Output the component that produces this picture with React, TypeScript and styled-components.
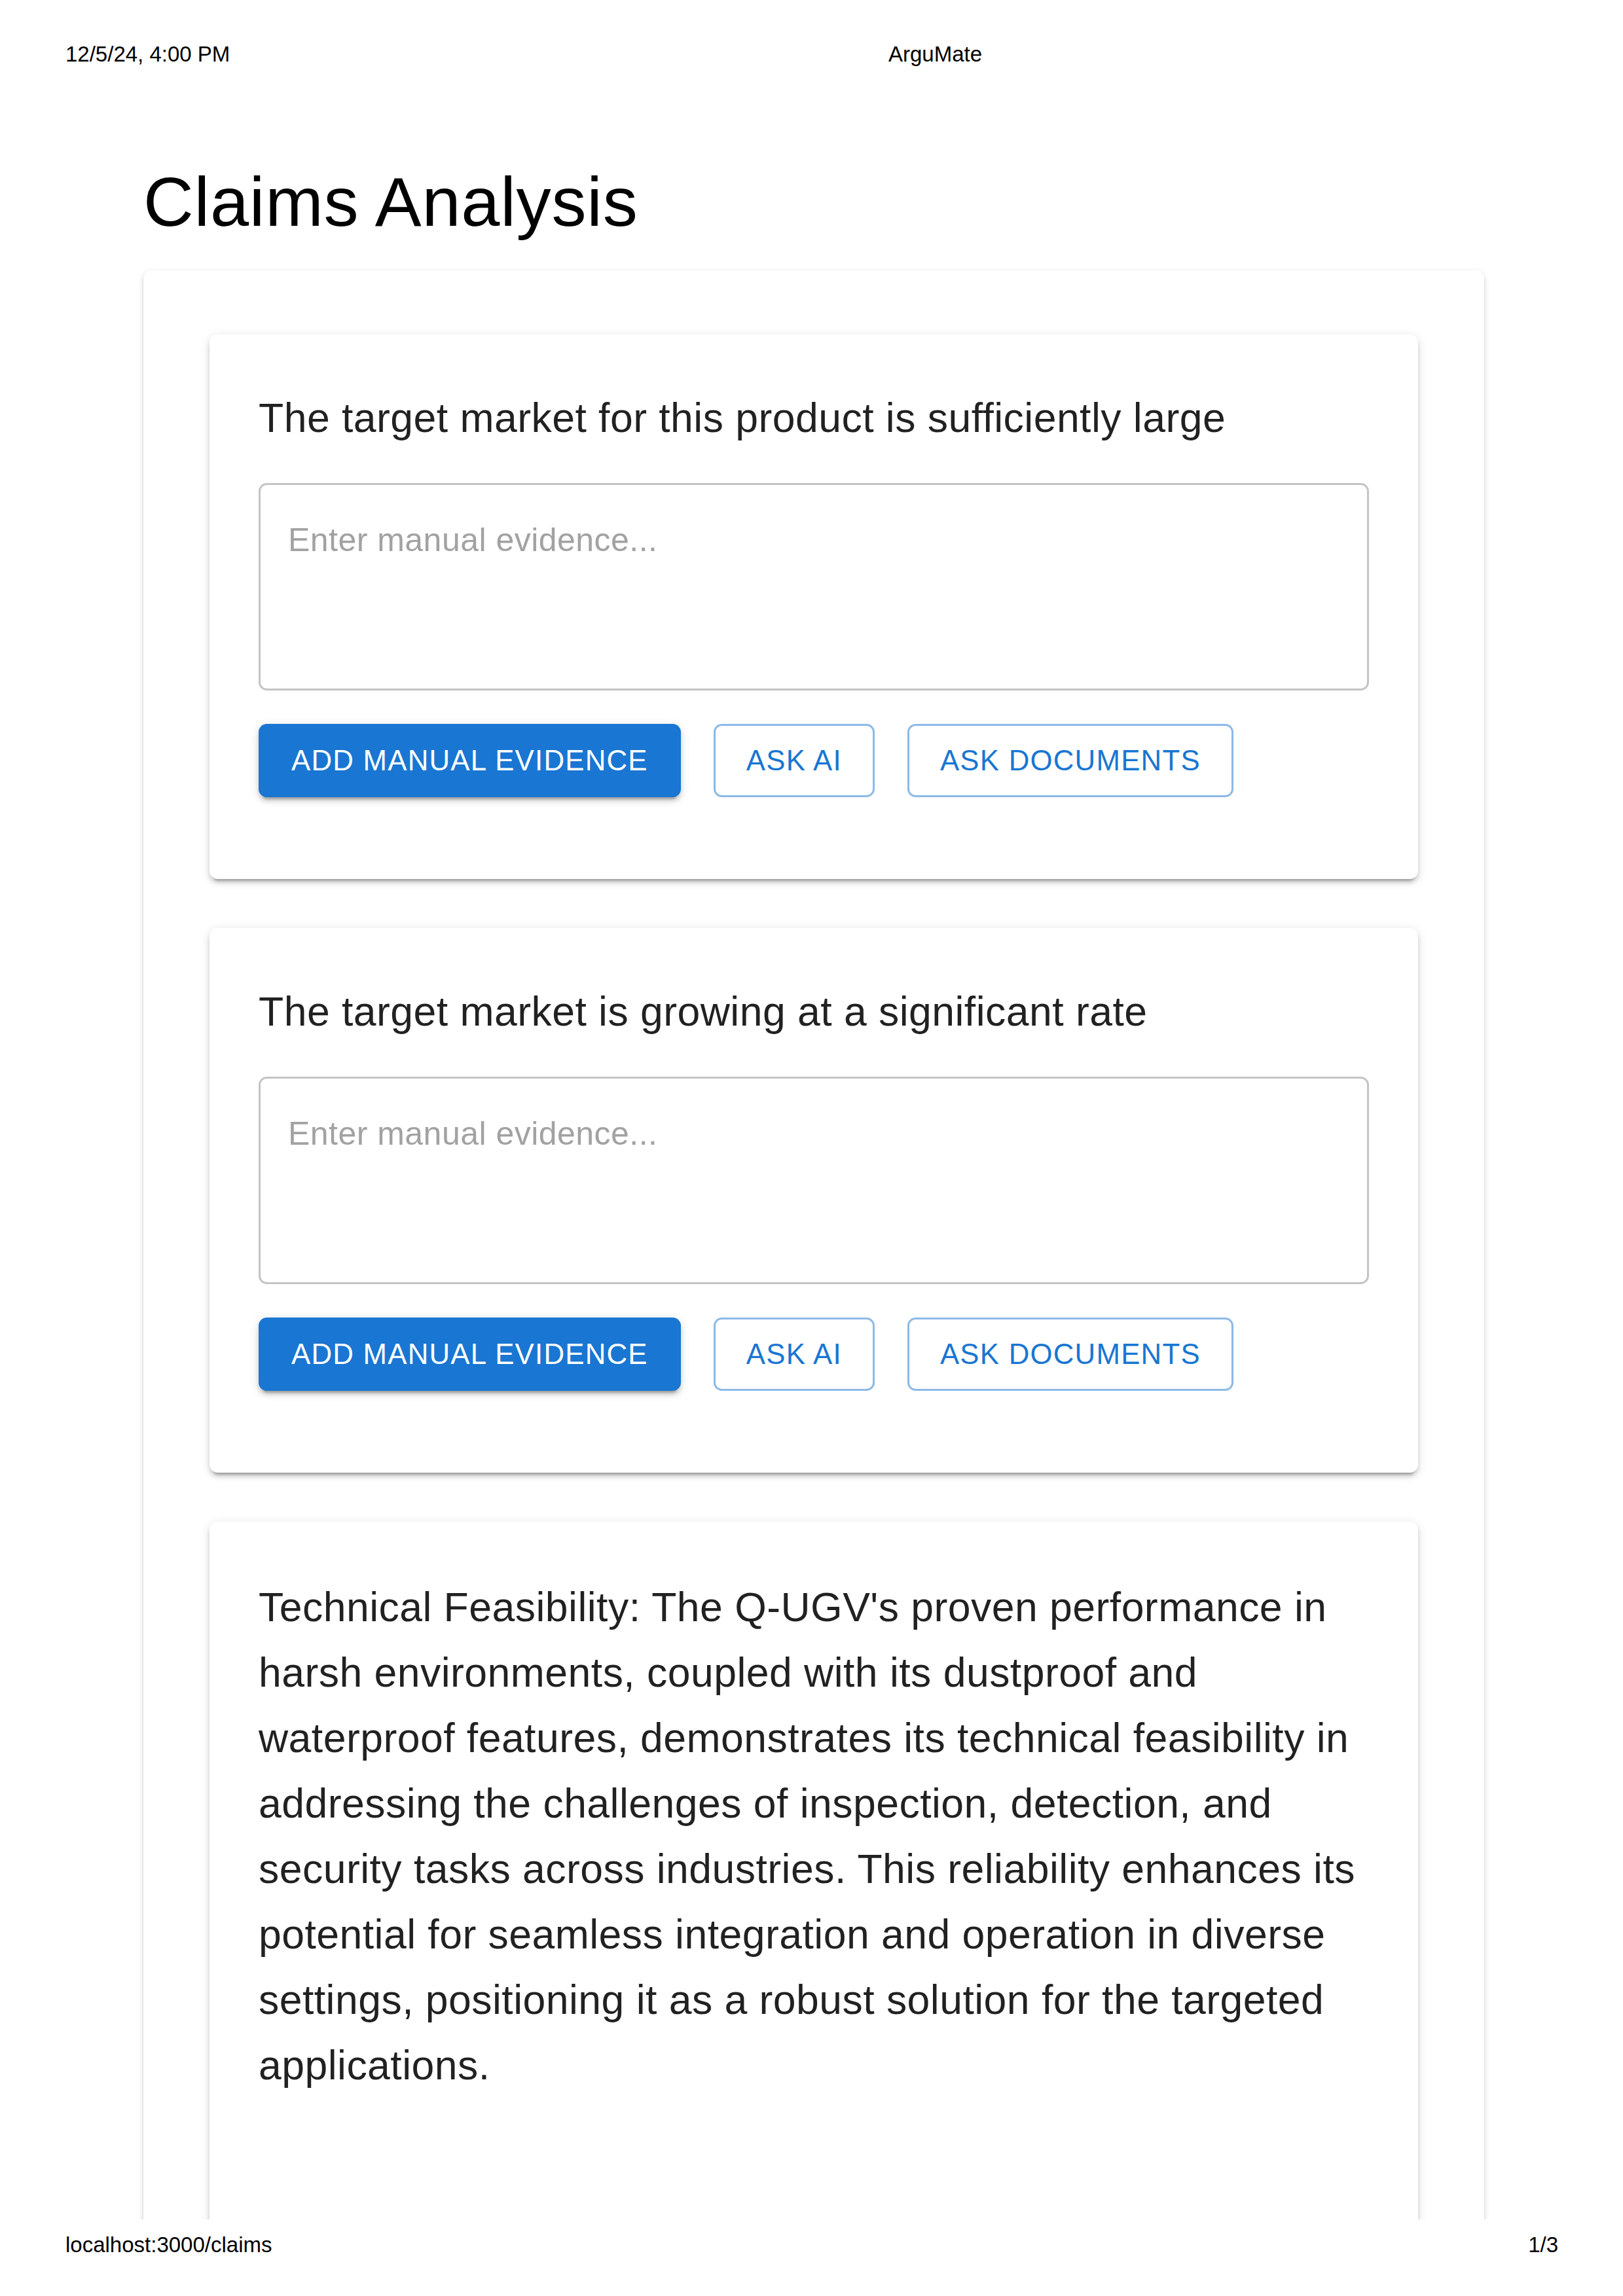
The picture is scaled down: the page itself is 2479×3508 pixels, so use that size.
import React from "react";
import styled, { createGlobalStyle } from "styled-components";

const GlobalStyle = createGlobalStyle`
  html, body {
    margin: 0;
    padding: 0;
    background: #ffffff;
  }
  body {
    font-family: "Liberation Sans", Arial, Helvetica, sans-serif;
  }
  *, *::before, *::after {
    box-sizing: border-box;
  }
`;

const Sheet = styled.div`
  width: 2479px;
  height: 3508px;
  display: flex;
  flex-direction: column;
  background: #ffffff;
  overflow: hidden;
`;

const PrintHeader = styled.header`
  flex: none;
  height: 103px;
  display: grid;
  grid-template-columns: 1257px 1fr;
  padding: 63px 99px 0 100px;
  font-size: 33px;
  line-height: 40px;
  color: #000000;
`;

const PrintFooter = styled.footer`
  flex: none;
  display: grid;
  grid-template-columns: 1fr auto;
  padding: 19px 99px 0 100px;
  font-size: 33px;
  line-height: 40px;
  color: #000000;
`;

const Viewport = styled.main`
  flex: none;
  height: 3288px;
  overflow: hidden;
  padding: 139.5px 0 0 219px;
`;

const PageTitle = styled.h1`
  margin: 0 0 39px;
  font-size: 106.25px;
  line-height: 131px;
  font-weight: 400;
  letter-spacing: 0.78px;
  color: #000000;
`;

const OuterPanel = styled.section`
  width: 2048px;
  background: #ffffff;
  border-radius: 12.5px;
  padding: 98px 101px 0;
  display: flex;
  flex-direction: column;
  gap: 75px;
  color: rgba(0, 0, 0, 0.87);
  box-shadow: 0 6px 3px -3px rgba(0, 0, 0, 0.2), 0 3px 3px 0 rgba(0, 0, 0, 0.14),
    0 3px 10px 0 rgba(0, 0, 0, 0.14);
`;

const ClaimCard = styled.article<{ $tall?: boolean }>`
  background: #ffffff;
  border-radius: 12.5px;
  padding: 77px 75px 125px;
  min-height: ${(p) => (p.$tall ? "1400px" : "0")};
  box-shadow: 0 9px 3px -6px rgba(0, 0, 0, 0.2), 0 6px 6px 0 rgba(0, 0, 0, 0.14),
    0 3px 16px 0 rgba(0, 0, 0, 0.12);
`;

const ClaimHeading = styled.h2`
  margin: 0 0 50px;
  font-size: 62.5px;
  line-height: 100px;
  font-weight: 400;
  letter-spacing: 0.47px;
`;

const ClaimText = styled.p`
  margin: 3px 0 0;
  font-size: 62.5px;
  line-height: 100px;
  font-weight: 400;
  letter-spacing: 0.47px;
`;

const EvidenceInput = styled.textarea`
  display: block;
  width: 100%;
  height: 317px;
  margin: 0;
  border: 3px solid #c4c4c4;
  border-radius: 12.5px;
  padding: 48px 42px;
  font-family: inherit;
  font-size: 50px;
  line-height: 72px;
  letter-spacing: 0.47px;
  color: rgba(0, 0, 0, 0.87);
  background: transparent;
  resize: none;
  outline: none;
  overflow: hidden;

  &::placeholder {
    color: #a2a2a2;
    opacity: 1;
  }
`;

const ActionRow = styled.div`
  display: flex;
  gap: 50px;
  margin-top: 51px;
`;

const ActionButton = styled.button<{ $variant: "contained" | "outlined" }>`
  height: 112px;
  display: inline-flex;
  align-items: center;
  justify-content: center;
  margin: 0;
  border-radius: 12.5px;
  font-family: inherit;
  font-size: 43.75px;
  font-weight: 500;
  letter-spacing: 1.25px;
  line-height: 106px;
  text-transform: uppercase;
  cursor: pointer;
  padding: ${(p) => (p.$variant === "contained" ? "0 50px" : "0 47px")};
  border: ${(p) =>
    p.$variant === "contained" ? "none" : "3px solid rgba(25, 118, 210, 0.5)"};
  background: ${(p) => (p.$variant === "contained" ? "#1976d2" : "#ffffff")};
  color: ${(p) => (p.$variant === "contained" ? "#ffffff" : "#1976d2")};
  box-shadow: ${(p) =>
    p.$variant === "contained"
      ? "0 9px 3px -6px rgba(0,0,0,0.2), 0 6px 6px 0 rgba(0,0,0,0.14), 0 3px 16px 0 rgba(0,0,0,0.12)"
      : "none"};
`;

const claims = [
  "The target market for this product is sufficiently large",
  "The target market is growing at a significant rate",
];

const feasibility =
  "Technical Feasibility: The Q-UGV's proven performance in harsh environments, coupled with its dustproof and waterproof features, demonstrates its technical feasibility in addressing the challenges of inspection, detection, and security tasks across industries. This reliability enhances its potential for seamless integration and operation in diverse settings, positioning it as a robust solution for the targeted applications.";

function EvidenceControls() {
  return (
    <>
      <EvidenceInput rows={3} placeholder="Enter manual evidence..." />
      <ActionRow>
        <ActionButton $variant="contained">Add Manual Evidence</ActionButton>
        <ActionButton $variant="outlined">Ask AI</ActionButton>
        <ActionButton $variant="outlined">Ask Documents</ActionButton>
      </ActionRow>
    </>
  );
}

export default function App() {
  return (
    <>
      <GlobalStyle />
      <Sheet>
        <PrintHeader>
          <span>12/5/24, 4:00 PM</span>
          <span>ArguMate</span>
        </PrintHeader>
        <Viewport>
          <PageTitle>Claims Analysis</PageTitle>
          <OuterPanel>
            {claims.map((c) => (
              <ClaimCard key={c}>
                <ClaimHeading>{c}</ClaimHeading>
                <EvidenceControls />
              </ClaimCard>
            ))}
            <ClaimCard $tall>
              <ClaimText>{feasibility}</ClaimText>
            </ClaimCard>
          </OuterPanel>
        </Viewport>
        <PrintFooter>
          <span>localhost:3000/claims</span>
          <span>1/3</span>
        </PrintFooter>
      </Sheet>
    </>
  );
}
